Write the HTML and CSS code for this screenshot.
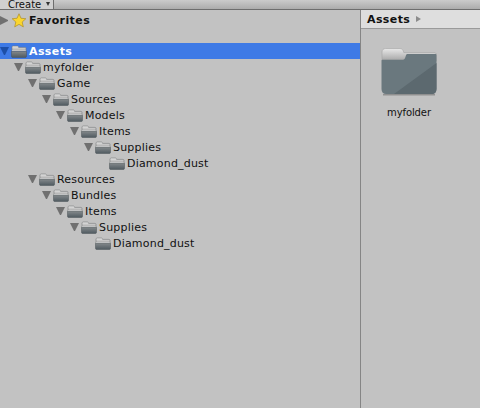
FILE: index.html
```html
<!DOCTYPE html>
<html>
    <head>
        <title>Project</title>
        <meta charset="utf8"/>
        <link rel="stylesheet" href="styles.css">
    </head>
    <body>
        <svg class="defs" width="0" height="0">
            <defs>
                <linearGradient id="folder_body" x1="0" y1="0" x2="0" y2="1">
                    <stop offset="0" stop-color="#84898c"/>
                    <stop offset="1" stop-color="#4f5a60"/>
                </linearGradient>
                <linearGradient id="folder_tab" x1="0" y1="0" x2="0" y2="1">
                    <stop offset="0" stop-color="#e8e8e8"/>
                    <stop offset="1" stop-color="#a4a4a4"/>
                </linearGradient>
                <symbol id="folder" viewBox="0 0 16 13">
                    <path d="M1 6V2.200C1 1.400 1.500 1 2.200 1H6.200C7 1 7.400 1.400 7.600 2.400H14C14.700 2.400 15 2.800 15 3.400V6Z" fill="url(#folder_tab)" stroke="#77797a" stroke-width=".6"/>
                    <path d="M1 5.500H14.800" stroke="#e6e6e6" stroke-width=".8"/>
                    <path d="M.5 6.200H15.500V11.200C15.500 12 15 12.500 14.300 12.500H1.700C1 12.500 .5 12 .5 11.200Z" fill="url(#folder_body)" stroke="#4a5257" stroke-width=".5"/>
                </symbol>
            </defs>
        </svg>

        <div class="top_bar">
            <div class="create_button">Create<span class="create_arrow"></span></div>
        </div>

        <div class="panes">
            <div class="tree">
                <div class="row favorites">
                    <span class="arrow_right"></span>
                    <svg class="star" viewBox="0 0 16 16">
                        <path d="M8 .8 10.100 5.600 15.300 6.100 11.400 9.600 12.600 14.800 8 12.100 3.400 14.800 4.600 9.600.7 6.100 5.900 5.600Z" fill="#fbd62e" stroke="#a98a22" stroke-width=".7"/>
                    </svg>
                    <span class="label_bold">Favorites</span>
                </div>

                <div class="row selected">
                    <span class="arrow_down"></span>
                    <svg class="folder"><use href="#folder"/></svg>
                    <span class="label_bold">Assets</span>
                </div>
                <div class="row d1"><span class="arrow_down"></span><svg class="folder"><use href="#folder"/></svg><span class="label">myfolder</span></div>
                <div class="row d2"><span class="arrow_down"></span><svg class="folder"><use href="#folder"/></svg><span class="label">Game</span></div>
                <div class="row d3"><span class="arrow_down"></span><svg class="folder"><use href="#folder"/></svg><span class="label">Sources</span></div>
                <div class="row d4"><span class="arrow_down"></span><svg class="folder"><use href="#folder"/></svg><span class="label">Models</span></div>
                <div class="row d5"><span class="arrow_down"></span><svg class="folder"><use href="#folder"/></svg><span class="label">Items</span></div>
                <div class="row d6"><span class="arrow_down"></span><svg class="folder"><use href="#folder"/></svg><span class="label">Supplies</span></div>
                <div class="row d7"><span class="no_arrow"></span><svg class="folder"><use href="#folder"/></svg><span class="label">Diamond_dust</span></div>
                <div class="row d2"><span class="arrow_down"></span><svg class="folder"><use href="#folder"/></svg><span class="label">Resources</span></div>
                <div class="row d3"><span class="arrow_down"></span><svg class="folder"><use href="#folder"/></svg><span class="label">Bundles</span></div>
                <div class="row d4"><span class="arrow_down"></span><svg class="folder"><use href="#folder"/></svg><span class="label">Items</span></div>
                <div class="row d5"><span class="arrow_down"></span><svg class="folder"><use href="#folder"/></svg><span class="label">Supplies</span></div>
                <div class="row d6"><span class="no_arrow"></span><svg class="folder"><use href="#folder"/></svg><span class="label">Diamond_dust</span></div>
            </div>

            <div class="browser">
                <div class="crumbs">
                    <span class="label_bold">Assets</span>
                    <span class="crumb_arrow"></span>
                </div>
                <div class="item">
                    <svg class="big_folder" viewBox="0 0 56 48">
                        <path d="M1 13V4C1 1.800 2.500 .5 4.500 .5H19C21 .5 22.300 2 22.800 4.500H53C54.500 4.500 55.300 5.300 55.300 6.500V13Z" fill="url(#folder_tab)" stroke="#a5a5a5" stroke-width=".6"/>
                        <path d="M.5 13C.5 12.200 1 11.800 1.800 11.800H21C22.500 11.800 23.300 11.200 24 10.200L25 7.300C25.300 6.500 25.800 6 26.800 6H54.500C55.200 6 55.500 6.500 55.500 7.200V41C55.500 44 53.800 46 50.800 46H5.200C2.200 46 .5 44 .5 41Z" fill="#6a787e"/>
                        <path d="M55.500 15V41C55.500 44 53.800 46 50.800 46H13Z" fill="#5c696f"/>
                        <path d="M2 46.800H54" stroke="#8f8f8f" stroke-width="1.400"/>
                    </svg>
                    <span class="item_label">myfolder</span>
                </div>
            </div>
        </div>
    </body>
</html>
```

FILE: styles.css
```css
html, body {
    margin: 0;
    height: 100%;
    overflow: hidden;
}
body {
    display: flex;
    flex-direction: column;
    background: #c2c2c2;
    color: #111;
    font-family: "DejaVu Sans", sans-serif;
    font-size: 11px;
}
.defs {
    position: absolute;
}

.top_bar {
    flex: none;
    height: 10px;
    box-sizing: border-box;
    background: linear-gradient(#cbcbcb, #acacac);
    border-bottom: 1px solid #6e6e6e;
    overflow: hidden;
}
.create_button {
    display: flex;
    align-items: flex-end;
    gap: 5px;
    width: 54px;
    height: 9px;
    box-sizing: border-box;
    padding-left: 8px;
    border-right: 1px solid #6e6e6e;
    background: #d0d0d0;
    font-size: 10px;
    line-height: 9px;
}
.create_arrow {
    margin-bottom: 3px;
    border-top: 4px solid #333;
    border-left: 2.500px solid transparent;
    border-right: 2.500px solid transparent;
}

.panes {
    flex: 1;
    display: flex;
}
.tree {
    width: 360px;
    padding-top: 1px;
}
.browser {
    flex: 1;
    border-left: 1px solid #858585;
}

.row {
    display: flex;
    align-items: center;
    height: 16px;
}
.favorites {
    box-sizing: border-box;
    padding-top: 2px;
    margin-bottom: 16px;
}
.selected {
    background: #3e7ae6;
    color: #fff;
}
.d1 { padding-left: 14px; }
.d2 { padding-left: 28px; }
.d3 { padding-left: 42px; }
.d4 { padding-left: 56px; }
.d5 { padding-left: 70px; }
.d6 { padding-left: 84px; }
.d7 { padding-left: 98px; }

.arrow_down, .arrow_right, .no_arrow {
    flex: none;
    box-sizing: border-box;
    width: 9px;
    margin-right: 2px;
}
.arrow_down {
    height: 8px;
    border-top: 8px solid #707070;
    border-left: 4.500px solid transparent;
    border-right: 4.500px solid transparent;
}
.selected .arrow_down {
    border-top-color: #1d4fa8;
}
.arrow_right {
    width: 8px;
    margin-right: 3px;
    height: 9px;
    border-left: 8px solid #707070;
    border-top: 4.500px solid transparent;
    border-bottom: 4.500px solid transparent;
}
.folder {
    flex: none;
    width: 16px;
    height: 13px;
    margin-right: 2px;
}
.star {
    flex: none;
    width: 16px;
    height: 15px;
    margin-right: 2px;
}
.label {
    letter-spacing: .2px;
}
.label_bold {
    font-weight: bold;
    letter-spacing: .4px;
}

.crumbs {
    display: flex;
    align-items: center;
    gap: 6px;
    height: 18px;
    padding-left: 6px;
    background: #dedede;
    border-bottom: 1px solid #9a9a9a;
}
.crumb_arrow {
    border-left: 5px solid #8c8c8c;
    border-top: 3px solid transparent;
    border-bottom: 3px solid transparent;
}
.item {
    display: flex;
    flex-direction: column;
    align-items: center;
    width: 96px;
    padding-top: 19px;
}
.big_folder {
    width: 56px;
    height: 48px;
}
.item_label {
    margin-top: 11px;
    font-size: 10px;
    letter-spacing: -.1px;
}
```
